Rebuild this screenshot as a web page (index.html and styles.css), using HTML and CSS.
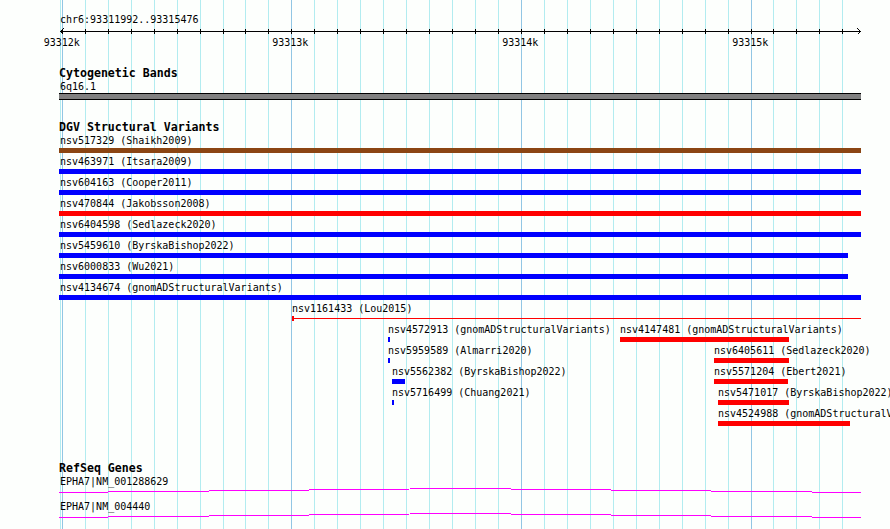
FILE: index.html
```html
<!DOCTYPE html>
<html lang="en">
<head>
    <meta charset="UTF-8">
    <meta name="viewport" content="width=device-width, initial-scale=1.0">
    <title>chr6:93311992..93315476</title>
    <link rel="stylesheet" href="styles.css">
</head>
<body>
    <!-- vertical scale lines, drawn under every track -->
    <svg class="grid" width="890" height="529" viewBox="0 0 890 529">
        <path class="grid-edge" d="M60.5 0V529"/>
        <path class="grid-minor" d="M85.5 0V529M108.5 0V529M131.5 0V529M154.5 0V529M177.5 0V529M200.5 0V529M223.5 0V529M245.5 0V529M268.5 0V529M314.5 0V529M337.5 0V529M360.5 0V529M383.5 0V529M406.5 0V529M429.5 0V529M452.5 0V529M475.5 0V529M498.5 0V529M544.5 0V529M567.5 0V529M590.5 0V529M613.5 0V529M636.5 0V529M659.5 0V529M682.5 0V529M705.5 0V529M728.5 0V529M773.5 0V529M796.5 0V529M819.5 0V529M842.5 0V529"/>
        <path class="grid-major" d="M62.5 0V529M291.5 0V529M521.5 0V529M751.5 0V529"/>
    </svg>

    <main class="view">
        <section class="track">
            <div class="label">chr6:93311992..93315476</div>
            <svg class="ruler" width="802" height="22" viewBox="0 0 802 22">
                <path class="axis" d="M1 5.5H802M3.5 3V8M26.5 3V8M49.5 3V8M72.5 3V8M95.5 3V8M118.5 3V8M141.5 3V8M164.5 3V8M186.5 3V8M209.5 3V8M232.5 3V8M255.5 3V8M278.5 3V8M301.5 3V8M324.5 3V8M347.5 3V8M370.5 3V8M393.5 3V8M416.5 3V8M439.5 3V8M462.5 3V8M485.5 3V8M508.5 3V8M531.5 3V8M554.5 3V8M577.5 3V8M600.5 3V8M623.5 3V8M646.5 3V8M669.5 3V8M692.5 3V8M714.5 3V8M737.5 3V8M760.5 3V8M783.5 3V8"/>
                <polyline class="axis" points="4.5,2.5 1.5,5.5 4.5,8.5"/>
                <polyline class="axis" points="798.5,2.5 801.5,5.5 798.5,8.5"/>
                <text x="2.7" y="20">93312k</text>
                <text x="231.3" y="20">93313k</text>
                <text x="461.3" y="20">93314k</text>
                <text x="691.3" y="20">93315k</text>
            </svg>
        </section>

        <section class="track cyto">
            <h2 class="track-title">Cytogenetic Bands</h2>
            <div class="label">6q16.1</div>
            <div class="band"></div>
        </section>

        <section class="track dgv">
            <h2 class="track-title">DGV Structural Variants</h2>

            <div class="lane">
                <div class="feat clipped" style="left:0;width:802px"><div class="name">nsv517329 (Shaikh2009)</div><div class="bar brown"></div></div>
            </div>
            <div class="lane">
                <div class="feat clipped" style="left:0;width:802px"><div class="name">nsv463971 (Itsara2009)</div><div class="bar blue"></div></div>
            </div>
            <div class="lane">
                <div class="feat clipped" style="left:0;width:802px"><div class="name">nsv604163 (Cooper2011)</div><div class="bar blue"></div></div>
            </div>
            <div class="lane">
                <div class="feat clipped" style="left:0;width:802px"><div class="name">nsv470844 (Jakobsson2008)</div><div class="bar red"></div></div>
            </div>
            <div class="lane">
                <div class="feat clipped" style="left:0;width:802px"><div class="name">nsv6404598 (Sedlazeck2020)</div><div class="bar blue"></div></div>
            </div>
            <div class="lane">
                <div class="feat clipped" style="left:0;width:789px"><div class="name">nsv5459610 (ByrskaBishop2022)</div><div class="bar blue"></div></div>
            </div>
            <div class="lane">
                <div class="feat clipped" style="left:0;width:789px"><div class="name">nsv6000833 (Wu2021)</div><div class="bar blue"></div></div>
            </div>
            <div class="lane">
                <div class="feat clipped" style="left:0;width:802px"><div class="name">nsv4134674 (gnomADStructuralVariants)</div><div class="bar blue"></div></div>
            </div>
            <div class="lane">
                <div class="feat" style="left:233px;width:569px">
                    <div class="name">nsv1161433 (Lou2015)</div>
                    <div class="glyph"><div class="block"></div><div class="stem"></div></div>
                </div>
            </div>
            <div class="lane">
                <div class="feat" style="left:329px;width:2px"><div class="name">nsv4572913 (gnomADStructuralVariants)</div><div class="bar blue"></div></div>
                <div class="feat" style="left:561px;width:169px"><div class="name">nsv4147481 (gnomADStructuralVariants)</div><div class="bar red"></div></div>
            </div>
            <div class="lane">
                <div class="feat" style="left:329px;width:2px"><div class="name">nsv5959589 (Almarri2020)</div><div class="bar blue"></div></div>
                <div class="feat" style="left:655px;width:75px"><div class="name">nsv6405611 (Sedlazeck2020)</div><div class="bar red"></div></div>
            </div>
            <div class="lane">
                <div class="feat" style="left:333px;width:13px"><div class="name">nsv5562382 (ByrskaBishop2022)</div><div class="bar blue"></div></div>
                <div class="feat" style="left:655px;width:74px"><div class="name">nsv5571204 (Ebert2021)</div><div class="bar red"></div></div>
            </div>
            <div class="lane">
                <div class="feat" style="left:333px;width:2px"><div class="name">nsv5716499 (Chuang2021)</div><div class="bar blue"></div></div>
                <div class="feat" style="left:659px;width:71px"><div class="name">nsv5471017 (ByrskaBishop2022)</div><div class="bar red"></div></div>
            </div>
            <div class="lane">
                <div class="feat" style="left:659px;width:132px"><div class="name">nsv4524988 (gnomADStructuralVariants)</div><div class="bar red"></div></div>
            </div>
        </section>

        <section class="track refseq">
            <h2 class="track-title">RefSeq Genes</h2>
            <div class="gene">
                <div class="label">EPHA7|NM_001288629</div>
                <svg class="intron" width="802" height="12" viewBox="0 0 802 12">
                    <polyline points="0,4.5 401,0.5 802,4.5"/>
                </svg>
            </div>
            <div class="gene">
                <div class="label">EPHA7|NM_004440</div>
                <svg class="intron" width="802" height="12" viewBox="0 0 802 12">
                    <polyline points="0,4.5 401,0.5 802,4.5"/>
                </svg>
            </div>
        </section>
    </main>
</body>
</html>
```

FILE: styles.css
```css
html, body {
    margin: 0;
    overflow: hidden;
}

body {
    position: relative;
    width: 890px;
    height: 529px;
    background-color: #fdfffd;
    color: #000;
    font-family: 'DejaVu Sans Mono', 'Liberation Mono', monospace;
    font-size: 10px;
    line-height: 12px;
}

.grid {
    position: absolute;
    top: 0;
    left: 0;
    shape-rendering: crispEdges;
}

.grid path {
    fill: none;
    stroke-width: 1;
}

.grid-minor,
.grid-edge {
    stroke: #b2ecf0;
}

.grid-major {
    stroke: #92c6e4;
}

.view {
    position: relative;
    width: 802px;
    padding: 13px 0 0 59px;
}

.track {
    position: relative;
}

.track-title {
    margin: 0;
    font-size: 11.6px;
    line-height: 13px;
    font-weight: bold;
}

.label {
    padding: 1px 0 0 1px;
    white-space: nowrap;
}

/* ruler */
.ruler {
    display: block;
    overflow: visible;
    shape-rendering: crispEdges;
}

.ruler .axis {
    fill: none;
    stroke: #000;
    stroke-width: 1;
}

.ruler text {
    font-family: 'DejaVu Sans Mono', 'Liberation Mono', monospace;
    font-size: 10px;
    text-anchor: middle;
    fill: #000;
    shape-rendering: auto;
}

/* cytogenetic bands */
.cyto {
    margin-top: 19px;
}

.band {
    height: 7px;
    box-sizing: border-box;
    border-top: 1px solid #000;
    border-bottom: 1px solid #000;
    background-color: #808080;
}

/* structural variants */
.dgv {
    margin-top: 21px;
}

.lane {
    position: relative;
    height: 21px;
}

.feat {
    position: absolute;
    top: 0;
}

.feat .name {
    padding-top: 1px;
    white-space: nowrap;
}

.feat.clipped .name {
    padding-left: 1px;
}

.bar {
    margin-top: 1px;
    height: 5px;
}

.brown {
    background-color: #8b4513;
}

.blue {
    background-color: #0000ff;
}

.red {
    background-color: #ff0000;
}

.glyph {
    display: flex;
    align-items: center;
    margin-top: 1px;
    height: 5px;
}

.glyph .block {
    width: 2px;
    height: 5px;
    background-color: #ff0000;
}

.glyph .stem {
    flex: 1;
    height: 1px;
    background-color: #ff0000;
}

/* genes */
.refseq {
    margin-top: 34px;
}

.intron {
    display: block;
    shape-rendering: crispEdges;
}

.intron polyline {
    fill: none;
    stroke: #ff00ff;
    stroke-width: 1;
}
```
